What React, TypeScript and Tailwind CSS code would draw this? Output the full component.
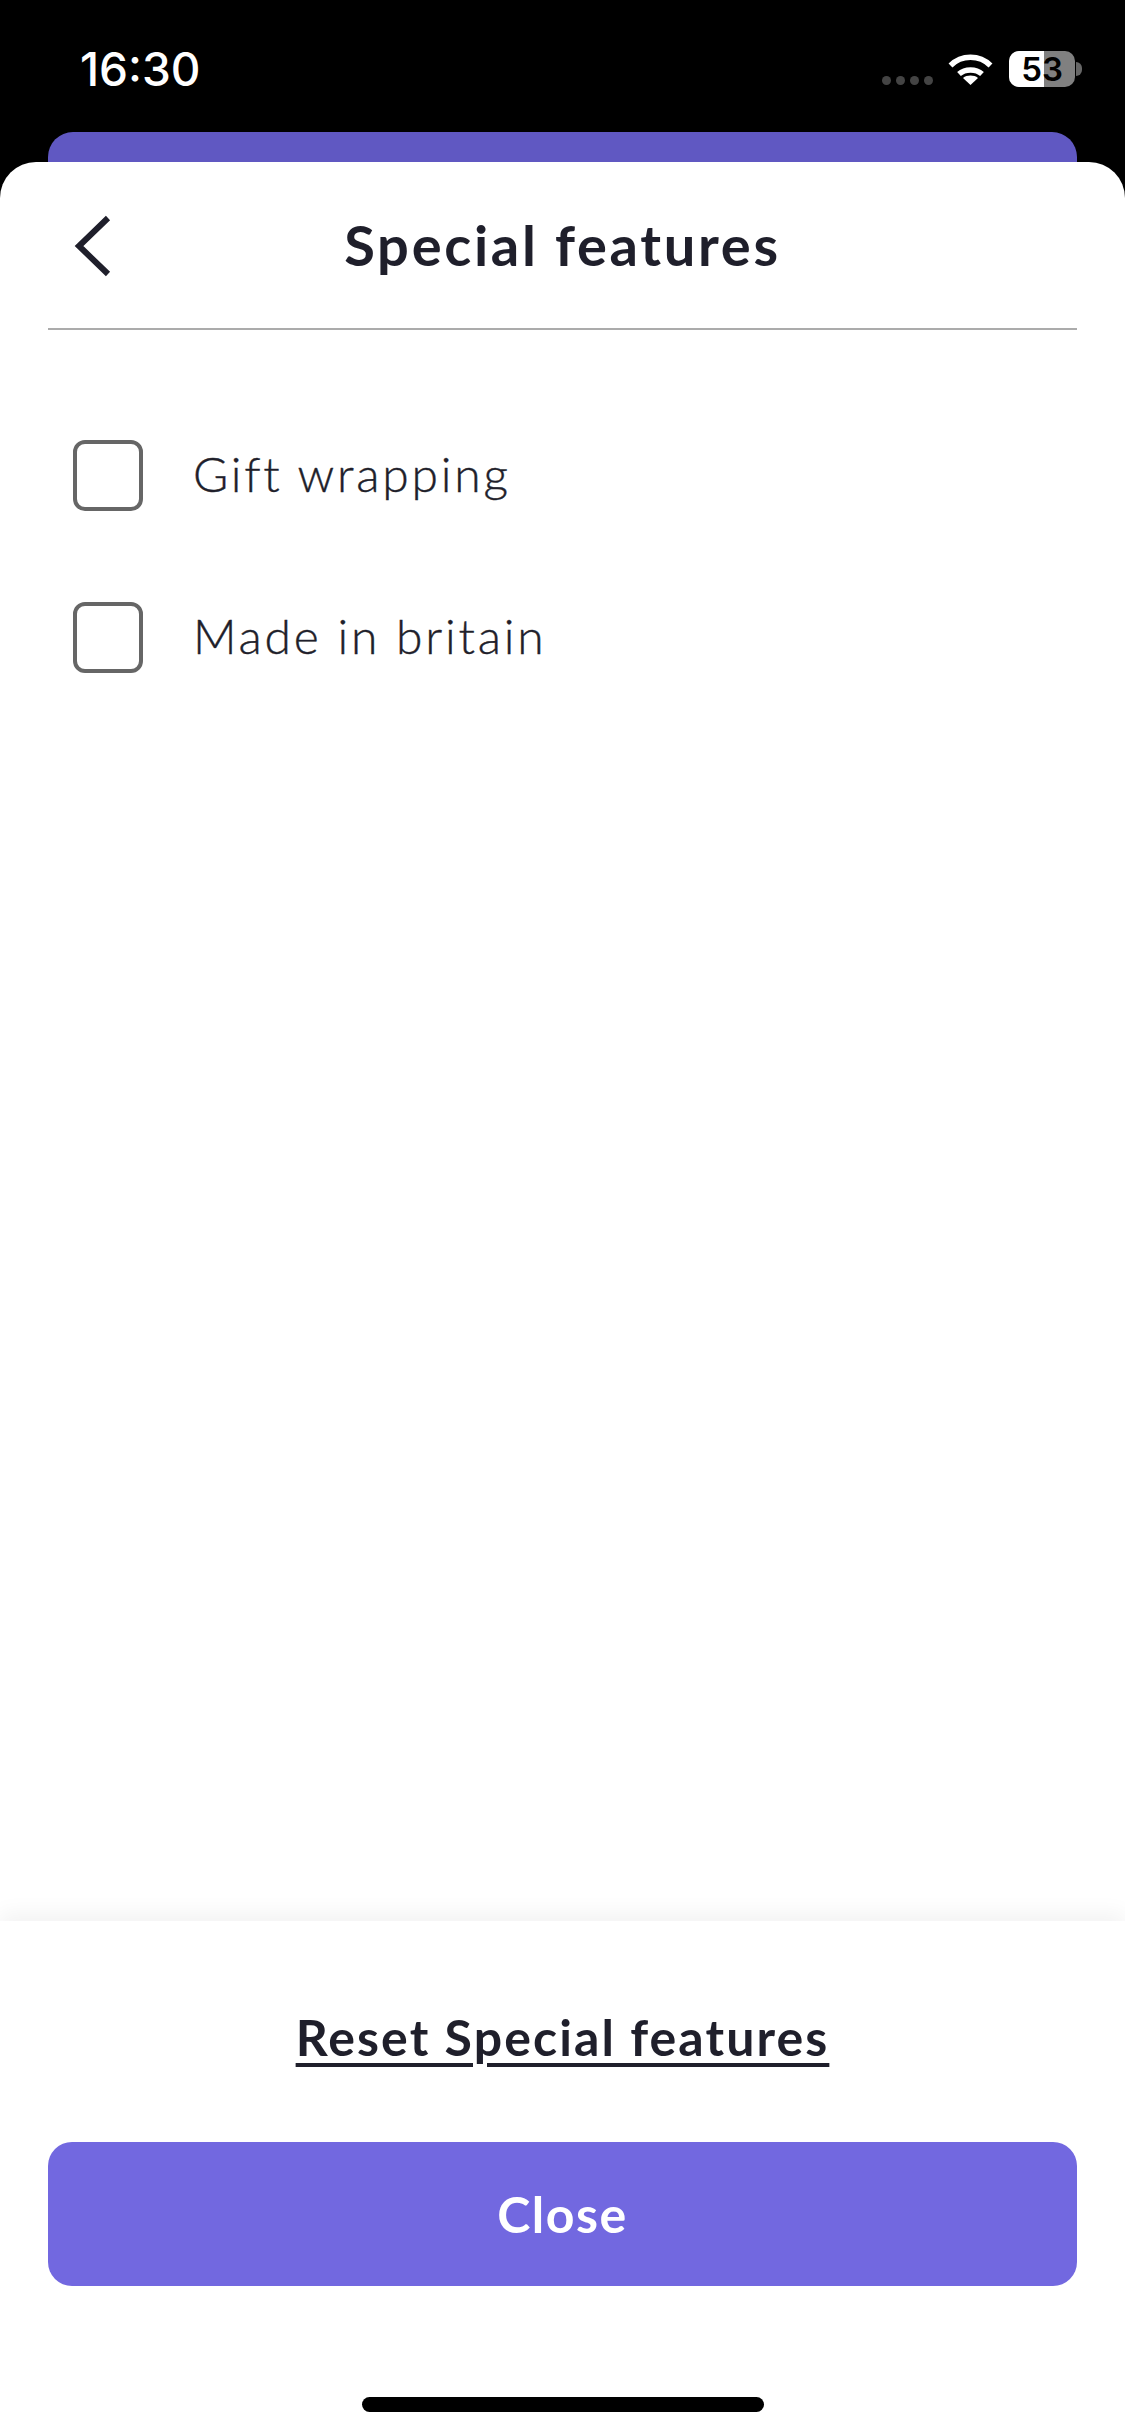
import React from 'react';

const features = ['Gift wrapping', 'Made in britain'];

const StatusBar = () => (
  <div className="h-[132px] flex items-start justify-between pt-[50px] pl-[80px] pr-[43px]">
    <span className="font-['Inter',sans-serif] text-[46px] leading-[38px] font-medium text-white">16:30</span>
    <div className="flex items-start pt-[1px]">
      <div className="flex gap-[5px] mt-[25px]">
        <div className="w-[9px] h-[9px] rounded-full bg-[#444444]" />
        <div className="w-[9px] h-[9px] rounded-full bg-[#444444]" />
        <div className="w-[9px] h-[9px] rounded-full bg-[#444444]" />
        <div className="w-[9px] h-[9px] rounded-full bg-[#444444]" />
      </div>
      <svg className="ml-[15px] mt-[1px]" width="45" height="33" viewBox="0 0 45 33" fill="none">
        <path d="M2.5 13.5C13.5 2.5 31.5 2.5 42.5 13.5" stroke="white" strokeWidth="5.5" />
        <path d="M11 22C17 16.5 28 16.5 34 22" stroke="white" strokeWidth="5.5" />
        <path d="M15 26C19 22.8 26 22.8 30 26L22.5 33Z" fill="white" />
      </svg>
      <div className="ml-[16px] w-[66px] h-[36px] rounded-[10px] flex bg-[#808080] relative">
        <div className="w-[35px] h-full bg-white rounded-l-[10px]" />
        <span className="absolute inset-0 flex items-center justify-center font-['Inter',sans-serif] text-[33px] leading-none font-semibold text-black">53</span>
      </div>
      <div className="w-[6px] h-[14px] mt-[11px] ml-[1px] rounded-r-full bg-[#666666]" />
    </div>
  </div>
);

export default function App() {
  return (
    <div className="w-[1125px] h-[2436px] bg-black flex flex-col overflow-hidden font-['Lato',sans-serif] text-[#1f1f2b]">
      <StatusBar />
      <div className="mx-[48px] h-[30px] shrink-0 bg-[#6058c2] rounded-t-[25px]" />
      <div className="flex-1 flex flex-col bg-white rounded-t-[36px]">
        <div className="mx-[48px] h-[168px] shrink-0 relative flex items-center justify-center border-b-2 border-[#ababab]">
          <svg className="absolute left-[26px] top-[53px]" width="38" height="62" viewBox="0 0 38 62" fill="none">
            <path d="M34 3L5 31L34 59" stroke="#1f1f2b" strokeWidth="6" />
          </svg>
          <h1 className="text-[56px] leading-none font-bold tracking-[2.7px]">Special features</h1>
        </div>
        <div className="flex-1 flex flex-col gap-[91px] pt-[110px] pl-[73px]">
          {features.map((name) => (
            <div key={name} className="flex items-center gap-[50px]">
              <div className="w-[70px] h-[71px] rounded-[12px] border-[4px] border-[#666666]" />
              <span className="text-[48px] leading-none font-light tracking-[2.8px] pb-[4px] [-webkit-text-stroke:0.4px_#1f1f2b]">{name}</span>
            </div>
          ))}
        </div>
        <div className="h-[515px] shrink-0 flex flex-col items-center px-[48px] pt-[87px] shadow-[0_-8px_20px_rgba(0,0,0,0.05)]">
          <a className="text-[50px] leading-[58px] font-bold tracking-[2.1px] underline decoration-[4px] underline-offset-[7px]">Reset Special features</a>
          <button className="mt-[76px] w-full h-[144px] shrink-0 rounded-[24px] bg-[#7268e0] text-white text-[50px] font-bold tracking-[1.5px]">Close</button>
          <div className="mt-[111px] w-[402px] h-[15px] shrink-0 rounded-full bg-black" />
        </div>
      </div>
    </div>
  );
}
